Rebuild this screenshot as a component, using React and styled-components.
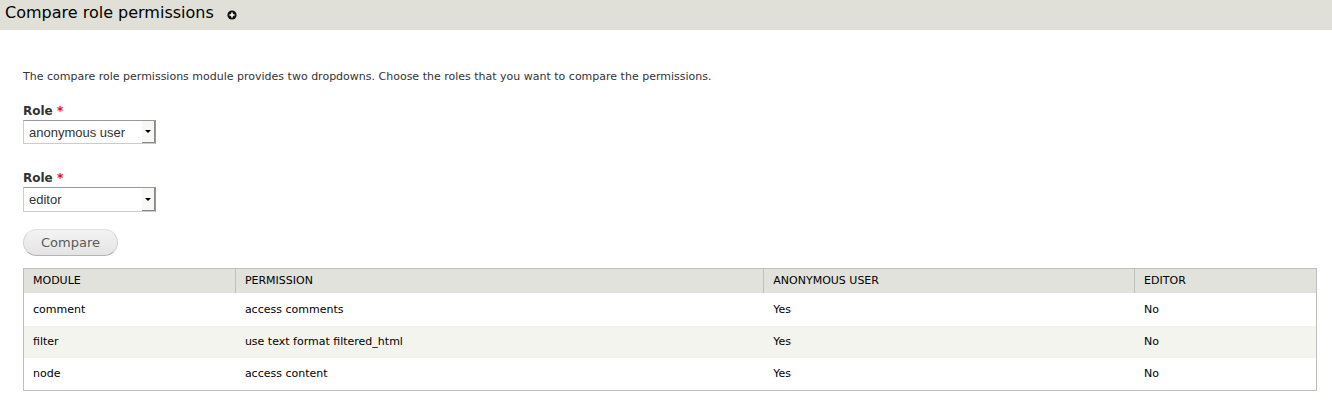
import React from "react";
import styled, { createGlobalStyle } from "styled-components";

const GlobalStyle = createGlobalStyle`
  *, *::before, *::after { box-sizing: border-box; }
  body {
    margin: 0;
    background: #fff;
    color: #333;
    font: 11px/16px "DejaVu Sans", Verdana, sans-serif;
  }
`;

const Branding = styled.header`
  display: flex;
  align-items: center;
  gap: 13px;
  height: 30px;
  padding: 0 5px 4px;
  background: #e0e0d8;
`;

const Title = styled.h1`
  margin: 0;
  font-size: 16px;
  line-height: 24px;
  font-weight: normal;
  color: #000;
`;

const ShortcutLink = styled.a`
  display: block;
  height: 10px;
  margin-top: 2px;
`;

const Content = styled.main`
  padding: 39px 15px 9px 23px;
`;

const Help = styled.p`
  margin: 0 0 18px;
`;

const Form = styled.form`
  display: flex;
  flex-direction: column;
  align-items: flex-start;
`;

const Field = styled.div`
  display: flex;
  flex-direction: column;
  margin-bottom: ${(p) => (p.$last ? 17 : 26)}px;
`;

const Label = styled.label`
  font-size: 12px;
  line-height: 17px;
  font-weight: bold;
`;

const Required = styled.span`
  color: #f00;
`;

const SelectBox = styled.div`
  position: relative;
  width: 133px;
`;

const Select = styled.select`
  display: block;
  appearance: none;
  width: 100%;
  height: ${(p) => p.$height}px;
  padding: 0 16px 0 5px;
  border: 1px solid #ccc;
  border-top-color: #999;
  border-right-color: #999;
  border-radius: 0;
  background: #fff;
  color: #333;
  font: 13px "Liberation Sans", Arial, sans-serif;
`;

const SelectArrow = styled.span`
  position: absolute;
  top: 1px;
  right: 1px;
  bottom: 1px;
  display: flex;
  align-items: center;
  justify-content: center;
  width: 13px;
  border-right: 1px solid #888;
  border-bottom: 1px solid #888;
  background: #f8f8f6;
  pointer-events: none;
`;

const Button = styled.button`
  height: 27px;
  margin-bottom: 12px;
  padding: 0 17px;
  border: 1px solid #e0e0e0;
  border-bottom-color: #b4b4b4;
  border-left-color: #d2d2d2;
  border-right-color: #d2d2d2;
  border-radius: 14px;
  background: linear-gradient(#f3f3f3, #e4e4e4);
  color: #5a5a5a;
  font: 13px "DejaVu Sans", Verdana, sans-serif;
`;

const Table = styled.table`
  width: 100%;
  table-layout: fixed;
  border: 1px solid #bebfb9;
  border-collapse: separate;
  border-spacing: 0;
  color: #000;
`;

const HeadCell = styled.th`
  width: ${(p) => p.$width};
  height: 24px;
  padding: 0 9px;
  border-right: 1px solid #bebfb9;
  background: #e1e2dc;
  font-weight: normal;
  text-align: left;
  text-transform: uppercase;
  &:last-child { border-right: 0; }
`;

const Row = styled.tr`
  background: #fff;
  &:nth-child(even) { background: #f3f4ee; }
`;

const Cell = styled.td`
  height: 32px;
  padding: 0 9px;
  ${Row}:first-child & { height: 33px; }
`;

const roles = ["anonymous user", "authenticated user", "editor", "administrator"];

const columns = [
  { name: "Module", width: "16.4%" },
  { name: "Permission", width: "40.9%" },
  { name: "anonymous user", width: "28.7%" },
  { name: "editor", width: "auto" },
];

const permissions = [
  ["comment", "access comments", "Yes", "No"],
  ["filter", "use text format filtered_html", "Yes", "No"],
  ["node", "access content", "Yes", "No"],
];

function RoleField({ id, value, height, last }) {
  return (
    <Field $last={last}>
      <Label htmlFor={id}>
        Role <Required>*</Required>
      </Label>
      <SelectBox>
        <Select id={id} defaultValue={value} $height={height} required>
          {roles.map((role) => (
            <option key={role}>{role}</option>
          ))}
        </Select>
        <SelectArrow aria-hidden="true">
          <svg width="6" height="3" viewBox="0 0 6 3">
            <path d="M0 0h6L3 3z" fill="#000" />
          </svg>
        </SelectArrow>
      </SelectBox>
    </Field>
  );
}

export default function App() {
  return (
    <>
      <GlobalStyle />
      <Branding>
        <Title>Compare role permissions</Title>
        <ShortcutLink href="#add-shortcut" aria-label="Add to shortcuts">
          <svg width="10" height="10" viewBox="0 0 10 10">
            <circle cx="5" cy="5" r="4.6" fill="#111" />
            <path d="M5 2.4v5.2M2.4 5h5.2" stroke="#fff" strokeWidth="1.7" />
          </svg>
        </ShortcutLink>
      </Branding>
      <Content>
        <Help>
          The compare role permissions module provides two dropdowns. Choose the
          roles that you want to compare the permissions.
        </Help>
        <Form onSubmit={(e) => e.preventDefault()}>
          <RoleField id="role-1" value="anonymous user" height={24} />
          <RoleField id="role-2" value="editor" height={25} last />
          <Button type="submit">Compare</Button>
        </Form>
        <Table>
          <thead>
            <tr>
              {columns.map((c) => (
                <HeadCell key={c.name} scope="col" $width={c.width}>
                  {c.name}
                </HeadCell>
              ))}
            </tr>
          </thead>
          <tbody>
            {permissions.map((row) => (
              <Row key={row[0]}>
                {row.map((text, i) => (
                  <Cell key={i}>{text}</Cell>
                ))}
              </Row>
            ))}
          </tbody>
        </Table>
      </Content>
    </>
  );
}
